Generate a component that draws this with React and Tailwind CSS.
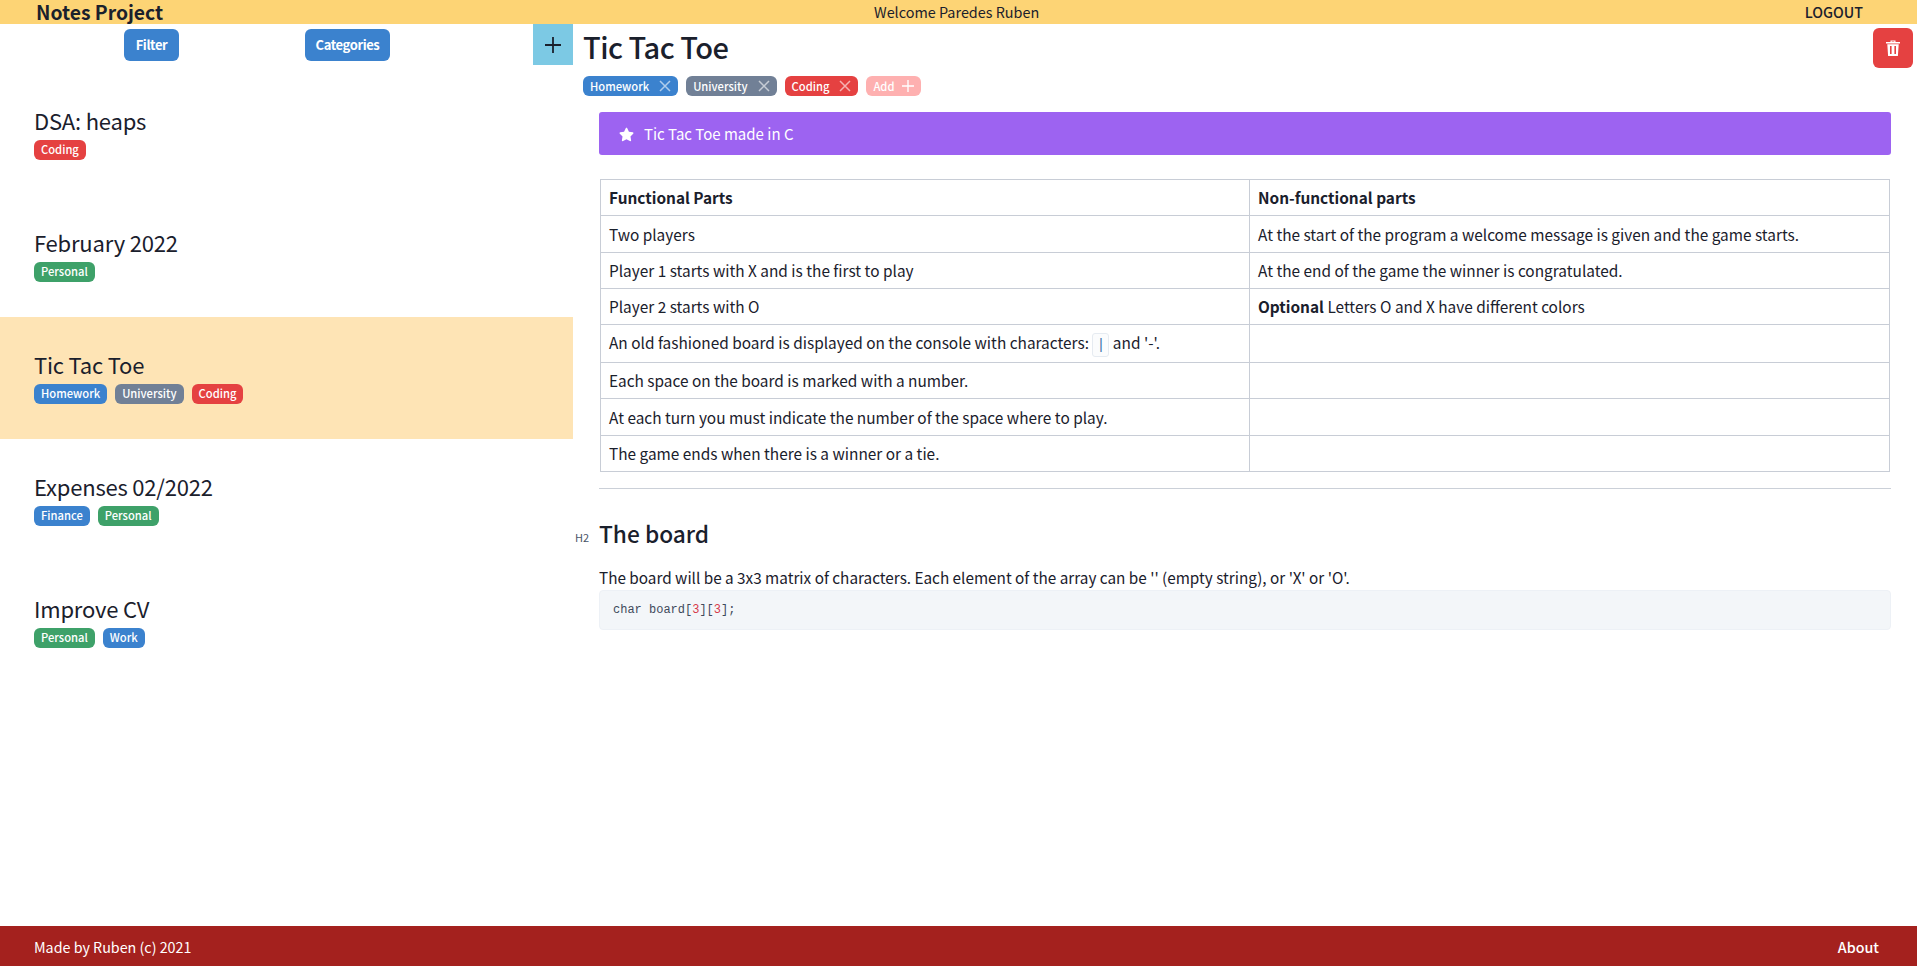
import { FaStar } from 'react-icons/fa';

const blue = 'bg-[#3b82ce]';
const red = 'bg-[#e54141]';
const green = 'bg-[#3ea169]';
const gray = 'bg-[#718096]';

const notes = [
  { title: 'DSA: heaps', tags: [['Coding', red]] },
  { title: 'February 2022', tags: [['Personal', green]] },
  { title: 'Tic Tac Toe', active: true, tags: [['Homework', blue], ['University', gray], ['Coding', red]] },
  { title: 'Expenses 02/2022', tags: [['Finance', blue], ['Personal', green]] },
  { title: 'Improve CV', tags: [['Personal', green], ['Work', blue]] },
];

const rows = [
  ['Two players', 'At the start of the program a welcome message is given and the game starts.', 'h-[37px]'],
  ['Player 1 starts with X and is the first to play', 'At the end of the game the winner is congratulated.', 'h-[36px]'],
  ['Player 2 starts with O', <><b className="font-bold">Optional</b> Letters O and X have different colors</>, 'h-[36px]'],
  [
    <>
      An old fashioned board is displayed on the console with characters:{' '}
      <code className="inline-block h-6 w-[17px] rounded-[3px] border border-[#e6ebf1] bg-[#fbfcfd] text-center align-middle font-['Liberation_Mono',monospace] text-[14px] leading-[22px] text-[#3b6ea8]">|</code>{' '}
      and '-'.
    </>,
    '',
    'h-[38px]',
  ],
  ['Each space on the board is marked with a number.', '', 'h-[36px]'],
  ['At each turn you must indicate the number of the space where to play.', '', 'h-[37px]'],
  ['The game ends when there is a winner or a tie.', '', 'h-[36px]'],
];

const CloseIcon = () => (
  <svg viewBox="0 0 12 12" className="ml-[10px] h-3 w-3 text-white/60" fill="none" stroke="currentColor" strokeWidth="1.5">
    <path d="M1 1l10 10M11 1L1 11" />
  </svg>
);

const PlusIcon = ({ className }) => (
  <svg viewBox="0 0 16 16" className={className} fill="none" stroke="currentColor" strokeWidth="1.8">
    <path d="M8 0v16M0 8h16" />
  </svg>
);

const TrashIcon = () => (
  <svg viewBox="0 0 14 16" className="h-4 w-[14px]" fill="white">
    <path d="M4.5 2V.6h5V2H14v1.4H0V2h4.5zM5.7 2h2.6V1.6H5.7V2z" fillRule="evenodd" />
    <path d="M1.3 4.2h11.4l-.8 11.8H2.1L1.3 4.2zM4 6v8h1.6V6H4zm4.4 0v8H10V6H8.4z" fillRule="evenodd" />
  </svg>
);

const Tag = ({ label, color }) => (
  <span className={`inline-flex h-5 items-center rounded-md px-[7px] text-[11.2px] font-medium leading-none text-white ${color}`}>
    {label}
  </span>
);

const App = () => {
  return (
    <div className="flex h-screen flex-col bg-white font-['Noto_Sans_CJK_SC','Noto_Sans',sans-serif] text-[16px] text-[#1a202c]">
      <header className="flex h-6 shrink-0 items-center bg-[#fdd475] pl-9 pr-[54px]">
        <div className="w-[838px] text-[19.3px] font-bold leading-6">Notes Project</div>
        <div className="text-[14.4px] leading-6">Welcome Paredes Ruben</div>
        <div className="ml-auto text-[14.3px] font-medium leading-6">LOGOUT</div>
      </header>

      <div className="flex min-h-0 flex-1">
        <aside className="flex w-[573px] shrink-0 flex-col">
          <div className="flex h-[49px] items-start">
            <div className="flex flex-1 gap-[126px] pl-[124px] pt-[5px]">
              <button className={`h-8 w-[55px] rounded-md text-[13px] font-bold tracking-[-0.4px] text-white ${blue}`}>Filter</button>
              <button className={`h-8 w-[85px] rounded-md text-[13px] font-bold tracking-[-0.4px] text-white ${blue}`}>Categories</button>
            </div>
            <button className="flex h-[41px] w-[40px] shrink-0 items-center justify-center bg-[#7cc9e4]">
              <PlusIcon className="h-4 w-4" />
            </button>
          </div>
          {notes.map((note) => (
            <div key={note.title} className={`flex h-[122px] flex-col justify-center pb-[5px] pl-[34px] ${note.active ? 'bg-[#fee4b5]' : ''}`}>
              <div className="text-[22px] leading-[32px] tracking-[-0.2px]">{note.title}</div>
              <div className="mt-[4px] flex gap-2">
                {note.tags.map(([label, color]) => (
                  <Tag key={label} label={label} color={color} />
                ))}
              </div>
            </div>
          ))}
        </aside>

        <main className="min-w-0 flex-1 pl-[10px] pr-1">
          <div className="flex items-start justify-between pt-1">
            <h1 className="text-[29px] font-medium leading-[36px] tracking-[-0.5px]">Tic Tac Toe</h1>
            <button className="flex h-10 w-10 items-center justify-center rounded-md bg-[#e54141] text-white">
              <TrashIcon />
            </button>
          </div>
          <div className="mt-[8px] flex gap-2">
            <span className={`inline-flex h-5 items-center rounded-md px-[7px] text-[11.2px] font-medium text-white ${blue}`}>Homework<CloseIcon /></span>
            <span className={`inline-flex h-5 items-center rounded-md px-[7px] text-[11.2px] font-medium text-white ${gray}`}>University<CloseIcon /></span>
            <span className={`inline-flex h-5 items-center rounded-md px-[7px] text-[11.2px] font-medium text-white ${red}`}>Coding<CloseIcon /></span>
            <span className="inline-flex h-5 items-center rounded-md bg-[#feb0b0] px-[7px] text-[11.2px] font-medium text-white">Add<PlusIcon className="ml-2 h-3 w-3" /></span>
          </div>

          <div className="ml-4 mr-[22px]">
            <div className="mt-4 flex h-[43px] items-center rounded-[3px] bg-[#9d63f1] pl-5 pt-[1px] text-white">
              <FaStar className="h-[15px] w-[15px]" />
              <span className="ml-[10px] text-[15px]">Tic Tac Toe made in C</span>
            </div>

            <table className="mx-[1px] mt-6 w-[1290px] table-fixed border-collapse text-[15.4px]">
              <colgroup>
                <col className="w-[649px]" />
                <col />
              </colgroup>
              <thead>
                <tr className="h-[36px]">
                  <th className="border border-[#c8cdd6] px-2 pt-[1px] text-left font-bold">Functional Parts</th>
                  <th className="border border-[#c8cdd6] px-2 pt-[1px] text-left font-bold">Non-functional parts</th>
                </tr>
              </thead>
              <tbody>
                {rows.map(([left, right, height], i) => (
                  <tr key={i} className={height}>
                    <td className="border border-[#c8cdd6] px-2 pt-[1px]">{left}</td>
                    <td className="border border-[#c8cdd6] px-2 pt-[1px]">{right}</td>
                  </tr>
                ))}
              </tbody>
            </table>

            <hr className="mt-4 border-t border-[#cbd0d8]" />

            <div className="relative mt-[29px]">
              <span className="absolute left-[-24px] top-[11px] text-[11px] leading-4 text-[#4a5568]">H2</span>
              <h2 className="text-[22.7px] font-medium leading-8">The board</h2>
            </div>
            <p className="mt-[17px] text-[15.3px] leading-[20px]">The board will be a 3x3 matrix of characters. Each element of the array can be '' (empty string), or 'X' or 'O'.</p>
            <pre className="mt-[3px] flex h-10 items-center rounded-[4px] border border-[#edf1f6] bg-[#f3f6f9] pl-[13px] font-['DejaVu_Sans_Mono',monospace] text-[12px] text-[#3f4a5c]">
              <code>char board[<span className="text-[#d73a49]">3</span>][<span className="text-[#d73a49]">3</span>];</code>
            </pre>
          </div>
        </main>
      </div>

      <footer className="flex h-10 shrink-0 items-center justify-between bg-[#a4211e] pl-[34px] pr-[38px] pt-[1px] text-[14.3px] text-white">
        <span>Made by Ruben (c) 2021</span>
        <span className="font-medium">About</span>
      </footer>
    </div>
  );
};

export default App;
